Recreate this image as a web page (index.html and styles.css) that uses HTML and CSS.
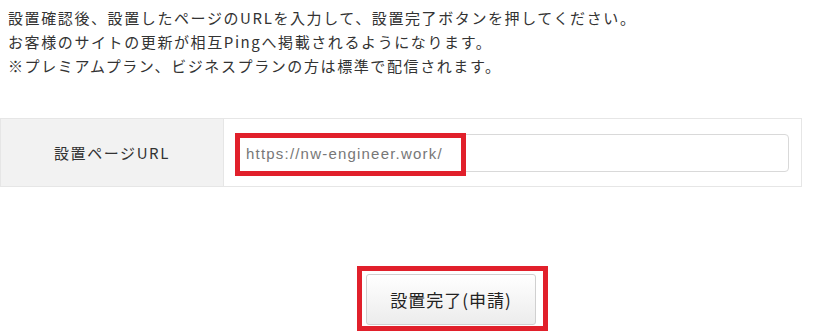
FILE: index.html
```html
<!DOCTYPE html>
<html lang="ja">

<head>
    <meta charset="UTF-8">
    <meta name="viewport" content="width=device-width, initial-scale=1.0">
    <title>設置完了</title>
    <link rel="stylesheet" href="styles.css">
</head>

<body>

    <div class="page">
        <div class="intro">
            <p>設置確認後、設置したページのURLを入力して、設置完了ボタンを押してください。</p>
            <p>お客様のサイトの更新が相互Pingへ掲載されるようになります。</p>
            <p>※プレミアムプラン、ビジネスプランの方は標準で配信されます。</p>
        </div>

        <div class="form-table">
            <div class="label-cell">設置ページURL</div>
            <div class="input-cell">
                <input type="text" class="url-input" value="https://nw-engineer.work/">
            </div>
        </div>

        <div class="submit-row">
            <button class="submit-btn">設置完了(申請)</button>
        </div>

        <div class="mark mark-input"></div>
        <div class="mark mark-button"></div>
    </div>

</body>

</html>
```

FILE: styles.css
```css
body {
    margin: 0;
    padding: 0;
    background-color: #fff;
    color: #333;
    font-family: "Noto Sans CJK JP", "Noto Sans", sans-serif;
}

.page {
    position: relative;
    width: 822px;
    height: 333px;
    overflow: hidden;
}

.intro {
    padding: 6px 8px 0;
    font-size: 15px;
    line-height: 24px;
    letter-spacing: 1.6px;
    height: 118px;
    box-sizing: border-box;
}

.intro p {
    margin: 0;
}

.form-table {
    display: flex;
    width: 802px;
    height: 69px;
    border: 1px solid #e6e6e6;
    box-sizing: border-box;
}

.label-cell {
    width: 222px;
    background-color: #f2f2f2;
    border-right: 1px solid #e6e6e6;
    display: flex;
    align-items: center;
    justify-content: center;
    font-size: 15px;
    letter-spacing: 1.6px;
    color: #333;
}

.input-cell {
    flex: 1;
    display: flex;
    align-items: center;
    padding: 1px 12px 0 11px;
}

.url-input {
    width: 100%;
    height: 38px;
    box-sizing: border-box;
    border: 1px solid #d9d9d9;
    border-radius: 4px;
    padding: 0 10px;
    font-family: "Liberation Sans", Arial, sans-serif;
    font-size: 15px;
    letter-spacing: 1.2px;
    color: #777;
    outline: none;
}

.submit-row {
    padding: 87px 0 0 366px;
}

.submit-btn {
    width: 170px;
    height: 51px;
    border: 1px solid #d0d0d0;
    border-radius: 3px;
    background: linear-gradient(#ffffff, #ececec);
    font-family: "Noto Sans CJK JP", sans-serif;
    font-size: 17px;
    letter-spacing: 1px;
    color: #222;
    cursor: pointer;
}

.mark {
    position: absolute;
    border: 5px solid #e1202b;
    box-sizing: border-box;
}

.mark-input {
    left: 235px;
    top: 133px;
    width: 231px;
    height: 43px;
}

.mark-button {
    left: 357px;
    top: 266px;
    width: 191px;
    height: 65px;
}
```
